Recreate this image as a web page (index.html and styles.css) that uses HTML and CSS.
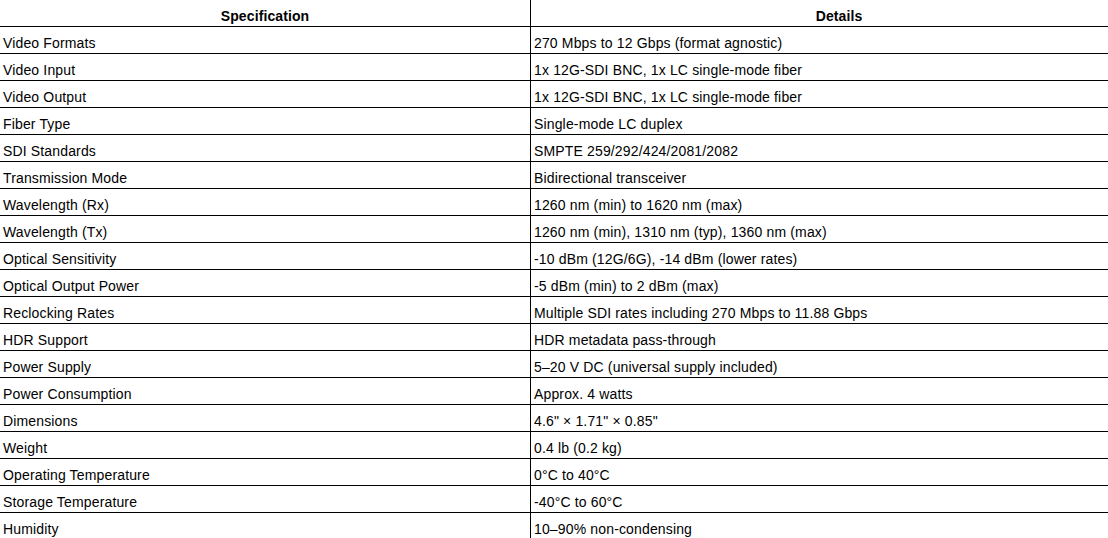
FILE: index.html
```html
<!DOCTYPE html>
<html>
<head>
<meta charset="utf-8">
<link rel="stylesheet" href="styles.css">
</head>
<body>
<table class="spec-table">
  <colgroup>
    <col class="col-spec">
    <col class="col-details">
  </colgroup>
  <thead>
    <tr><th>Specification</th><th>Details</th></tr>
  </thead>
  <tbody>
    <tr><td>Video Formats</td><td>270 Mbps to 12 Gbps (format agnostic)</td></tr>
    <tr><td>Video Input</td><td>1x 12G-SDI BNC, 1x LC single-mode fiber</td></tr>
    <tr><td>Video Output</td><td>1x 12G-SDI BNC, 1x LC single-mode fiber</td></tr>
    <tr><td>Fiber Type</td><td>Single-mode LC duplex</td></tr>
    <tr><td>SDI Standards</td><td>SMPTE 259/292/424/2081/2082</td></tr>
    <tr><td>Transmission Mode</td><td>Bidirectional transceiver</td></tr>
    <tr><td>Wavelength (Rx)</td><td>1260 nm (min) to 1620 nm (max)</td></tr>
    <tr><td>Wavelength (Tx)</td><td>1260 nm (min), 1310 nm (typ), 1360 nm (max)</td></tr>
    <tr><td>Optical Sensitivity</td><td>-10 dBm (12G/6G), -14 dBm (lower rates)</td></tr>
    <tr><td>Optical Output Power</td><td>-5 dBm (min) to 2 dBm (max)</td></tr>
    <tr><td>Reclocking Rates</td><td>Multiple SDI rates including 270 Mbps to 11.88 Gbps</td></tr>
    <tr><td>HDR Support</td><td>HDR metadata pass-through</td></tr>
    <tr><td>Power Supply</td><td>5–20 V DC (universal supply included)</td></tr>
    <tr><td>Power Consumption</td><td>Approx. 4 watts</td></tr>
    <tr><td>Dimensions</td><td>4.6" × 1.71" × 0.85"</td></tr>
    <tr><td>Weight</td><td>0.4 lb (0.2 kg)</td></tr>
    <tr><td>Operating Temperature</td><td>0°C to 40°C</td></tr>
    <tr><td>Storage Temperature</td><td>-40°C to 60°C</td></tr>
    <tr><td>Humidity</td><td>10–90% non-condensing</td></tr>
  </tbody>
</table>
</body>
</html>
```
FILE: styles.css
```css
html, body {
  margin: 0;
  padding: 0;
  background: #fff;
  overflow: hidden;
}
body {
  font-family: "Liberation Sans", Arial, sans-serif;
  font-size: 14px;
  letter-spacing: 0.15px;
  color: #000;
}
.spec-table {
  border-collapse: collapse;
  table-layout: fixed;
  width: 1148px;
  margin: -1px 0 0 -1px;
}
.col-spec { width: 531px; }
.col-details { width: 617px; }
.spec-table th,
.spec-table td {
  border: 1px solid #000;
  padding: 7px 3px 1px;
  line-height: 18px;
  text-align: left;
  white-space: nowrap;
  vertical-align: top;
}
.spec-table th {
  text-align: center;
  font-weight: bold;
  letter-spacing: 0.1px;
}
```
